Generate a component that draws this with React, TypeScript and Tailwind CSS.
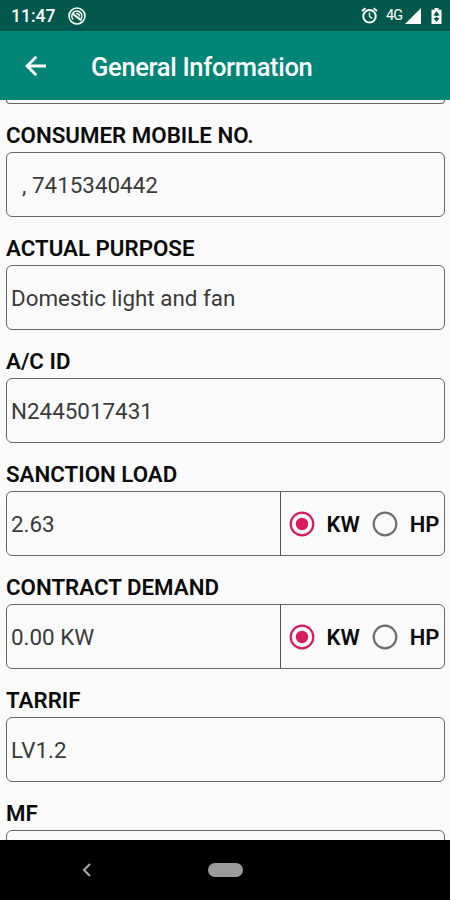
import * as React from "react";

interface FieldProps {
  label: string;
  value?: string;
  indent?: boolean;
  units?: boolean;
}

const RadioOption = ({ label, checked }: { label: string; checked?: boolean }) => (
  <div className="flex items-center">
    <svg width="26" height="26" viewBox="0 0 26 26" fill="none">
      <circle
        cx="13"
        cy="13"
        r="11.3"
        stroke={checked ? "#D81B60" : "#6E6E6E"}
        strokeWidth="2.2"
      />
      {checked && <circle cx="13" cy="13" r="6.2" fill="#D81B60" />}
    </svg>
    <span className="ml-3 pt-0.5 text-[22px] font-semibold leading-6 text-[#0c0c0c]">
      {label}
    </span>
  </div>
);

const Field = ({ label, value, indent, units }: FieldProps) => (
  <div className="h-[113px] shrink-0">
    <div className="flex h-12 items-end pb-1 text-[22.3px] font-semibold leading-[26px] text-[#0c0c0c]">
      {label}
    </div>
    <div className="flex h-[65px] rounded-[6px] border border-[#666] bg-[#fafafa]">
      <div
        className={`flex flex-1 items-center pt-px text-[22.4px] leading-7 text-[#3a3a3a] ${
          indent ? "pl-[15px]" : "pl-1"
        }`}
      >
        {value}
      </div>
      {units && (
        <div className="flex w-[164px] items-center gap-3 border-l border-[#555] pl-[7.5px]">
          <RadioOption label="KW" checked />
          <RadioOption label="HP" />
        </div>
      )}
    </div>
  </div>
);

const StatusBar = () => (
  <div className="flex h-[31px] shrink-0 items-center bg-[#00574B] pl-[11px] pr-2 text-white">
    <span className="text-[17.5px] font-medium leading-5">11:47</span>
    <svg className="ml-[13px]" width="18" height="18" viewBox="0 0 18 18" fill="none" stroke="#fff">
      <circle cx="9" cy="9" r="8" strokeWidth="1.6" />
      <path d="M5.2 12.5A5 5 0 1 1 12.8 12.2" strokeWidth="1.6" />
      <path d="M5 7L13.5 13.5" strokeWidth="2.2" />
      <path d="M8 6.6C10 6 11.5 7.5 11.5 9.5" strokeWidth="1.5" />
    </svg>
    <div className="ml-auto flex items-center">
      <svg width="17" height="17" viewBox="0 0 17 17" fill="none" stroke="#fff" strokeWidth="2">
        <circle cx="8.5" cy="9.3" r="6.2" />
        <path d="M1 4L4.4 1.2M16 4L12.6 1.2" />
        <path d="M8.5 5.5V9.5L11.2 11.3" strokeWidth="1.4" />
      </svg>
      <span className="ml-2 w-[17px] text-[14.5px] leading-5 tracking-[-1px]">4G</span>
      <svg className="ml-[2px]" width="16" height="16" viewBox="0 0 16 16">
        <path d="M0 16L16 0V16Z" fill="#fff" />
      </svg>
      <svg className="ml-[10px]" width="11" height="16" viewBox="0 0 11 16">
        <path d="M3.5 0H7.5V1.7H10.5V16H0.5V1.7H3.5Z" fill="#fff" />
        <path d="M5.5 3L2.3 7.5H4.5V10H2.5L5.5 14L8.5 10H6.5V7.5H8.7Z" fill="#00574B" />
        <path d="M3.8 8.7H7.2" stroke="#fff" strokeWidth="1" />
      </svg>
    </div>
  </div>
);

const App = () => {
  return (
    <div className="flex h-[900px] w-[450px] flex-col overflow-hidden bg-[#fafafa] font-['Roboto',sans-serif]">
      <StatusBar />
      <header className="flex h-[69px] shrink-0 items-center bg-[#008577] pl-[25px] text-white">
        <svg width="22" height="22" viewBox="0 0 22 22" fill="none" stroke="#fff" strokeWidth="2.8">
          <path d="M21 11H2.5M11.3 1.7L2 11L11.3 20.3" />
        </svg>
        <h1 className="ml-11 pt-[3px] text-[25.5px] font-medium leading-8 tracking-[-0.32px]">
          General Information
        </h1>
      </header>
      <main className="flex h-[740px] shrink-0 flex-col overflow-hidden pl-[6px] pr-[5px]">
        <div className="h-1 shrink-0 rounded-b-[6px] border border-t-0 border-[#666]" />
        <Field label="CONSUMER MOBILE NO." value=", 7415340442" indent />
        <Field label="ACTUAL PURPOSE" value="Domestic light and fan" />
        <Field label="A/C ID" value="N2445017431" />
        <Field label="SANCTION LOAD" value="2.63" units />
        <Field label="CONTRACT DEMAND" value="0.00 KW" units />
        <Field label="TARRIF" value="LV1.2" />
        <Field label="MF" />
      </main>
      <nav className="flex h-[60px] shrink-0 items-center bg-black pl-[82px]">
        <svg width="10" height="14" viewBox="0 0 10 14" fill="none" stroke="#aaa" strokeWidth="2">
          <path d="M8 1L2 7L8 13" />
        </svg>
        <div className="ml-[116px] h-[14px] w-[35px] rounded-full bg-[#9b9b9b]" />
      </nav>
    </div>
  );
};

export default App;
